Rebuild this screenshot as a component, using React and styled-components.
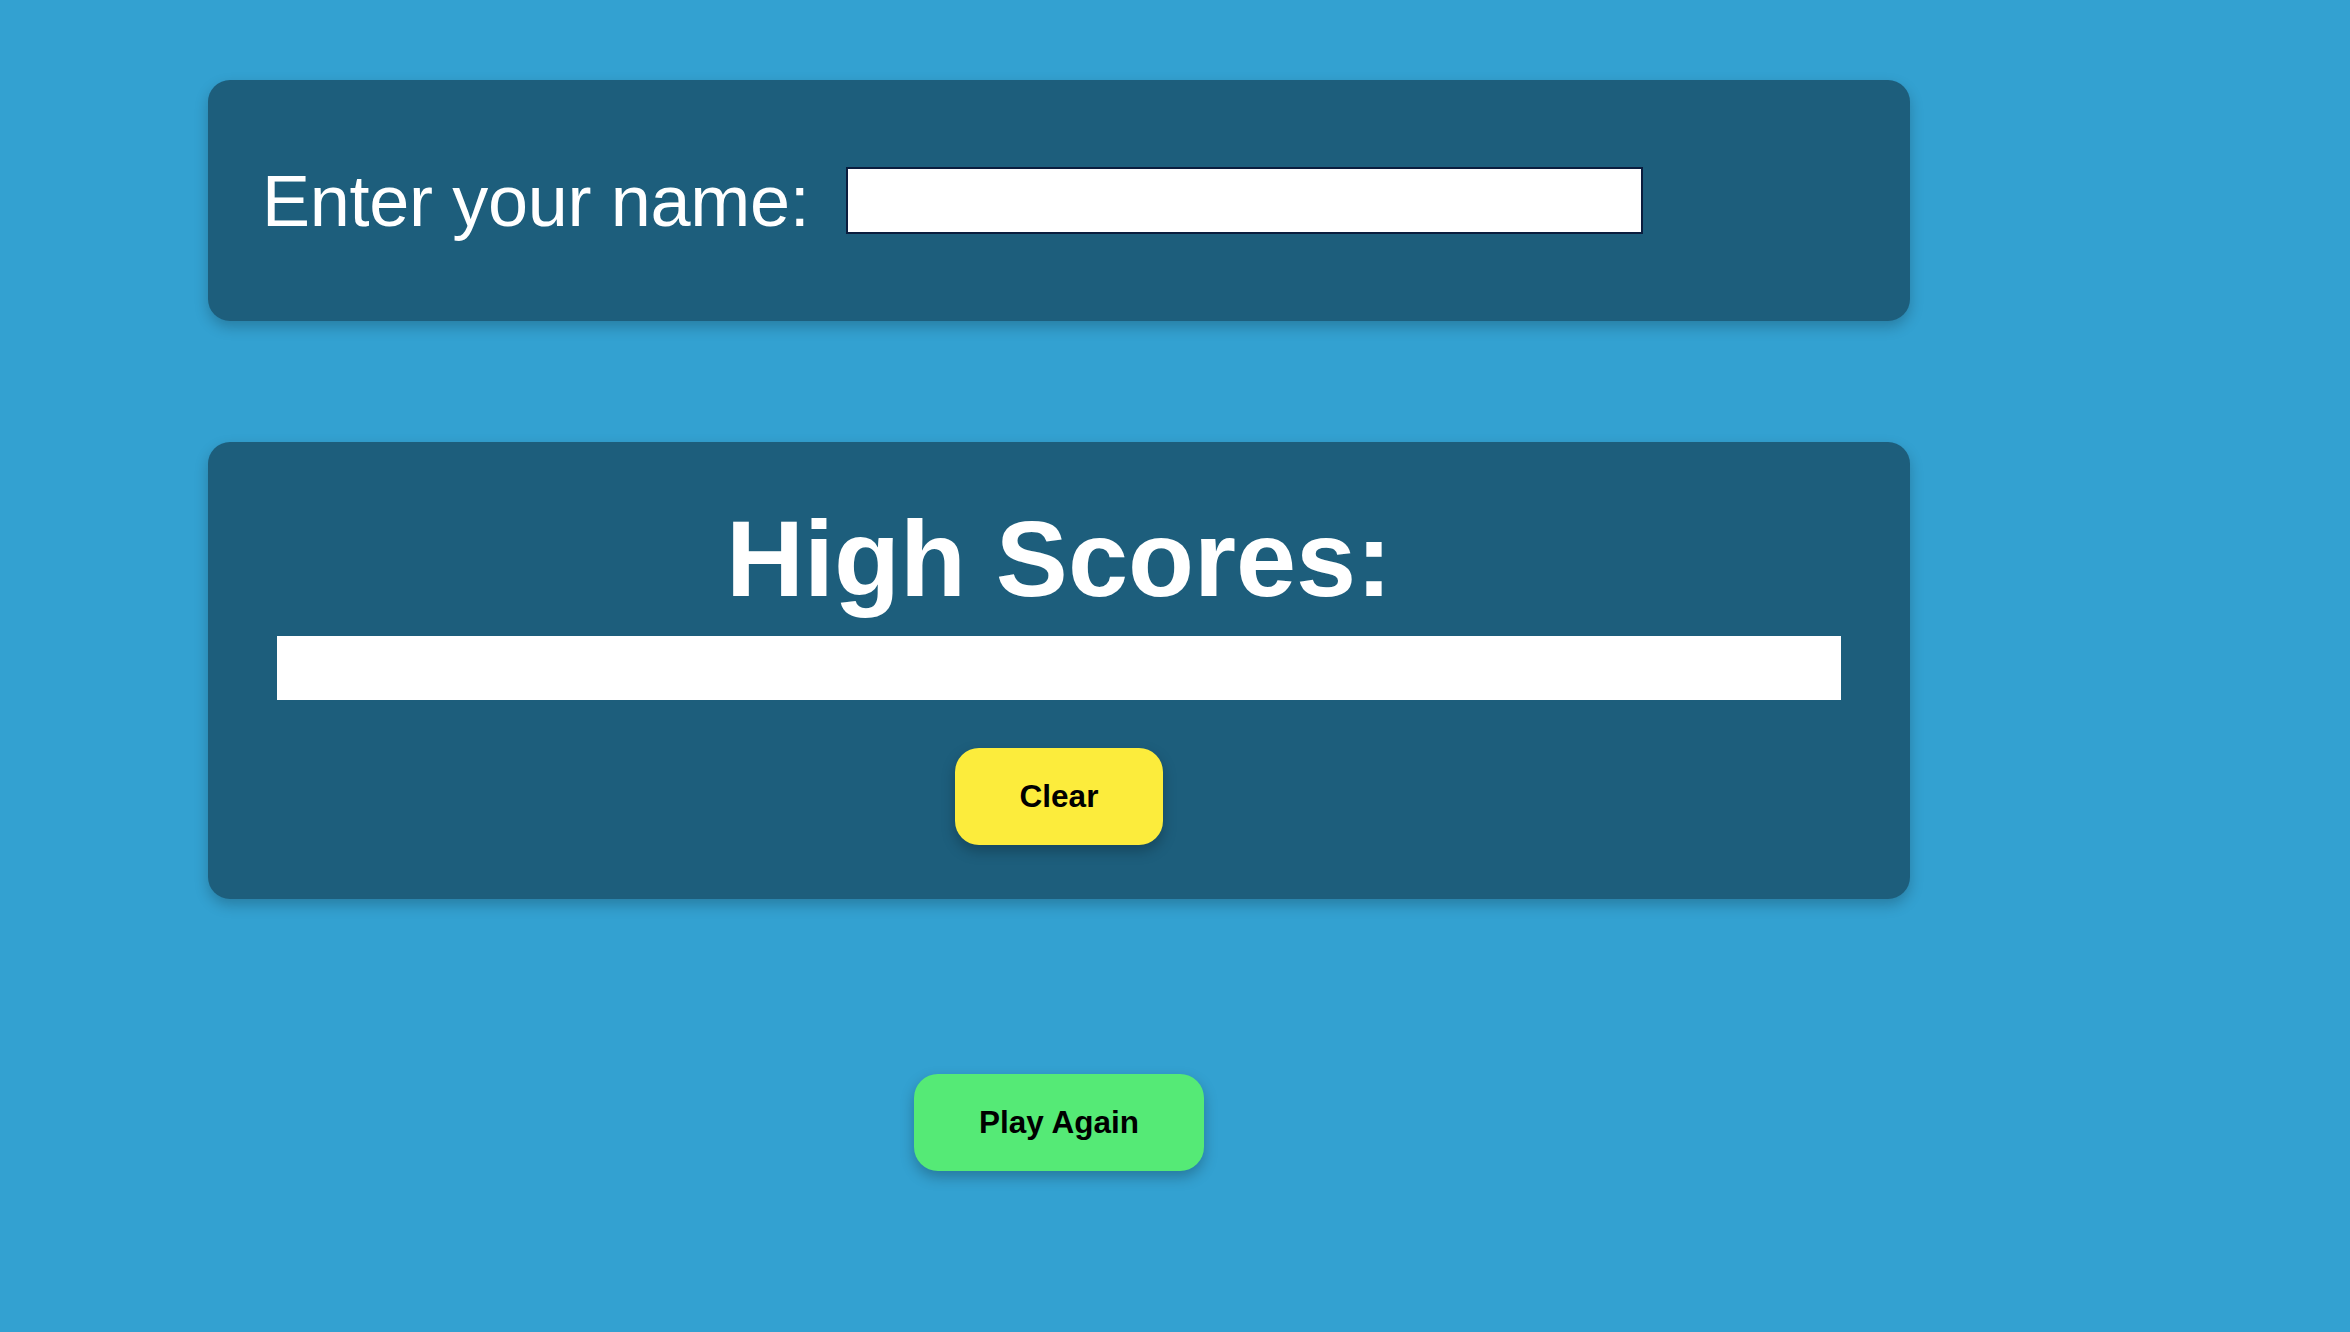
import React, { useState } from 'react';
import styled, { createGlobalStyle } from 'styled-components';

const GlobalStyle = createGlobalStyle`
  html, body {
    margin: 0;
    padding: 0;
    background-color: #33a1d1;
    font-family: "Liberation Sans", Arial, sans-serif;
  }
  * {
    box-sizing: border-box;
  }
`;

const Page = styled.main`
  width: 1702px;
  margin-left: 208px;
  padding-top: 80px;
  padding-bottom: 160px;
  display: flex;
  flex-direction: column;
  align-items: center;
`;

const Card = styled.section`
  width: 100%;
  background-color: #1d5e7c;
  border-radius: 22px;
  box-shadow: 0 6px 14px rgba(0, 0, 0, 0.22);
`;

const NameCard = styled(Card)`
  height: 241px;
  padding: 0 54px;
  display: flex;
  align-items: center;
  gap: 37px;
`;

const Label = styled.label`
  color: #fff;
  font-size: 72px;
  line-height: 82px;
  letter-spacing: -0.3px;
  white-space: nowrap;
`;

const NameInput = styled.input`
  width: 797px;
  height: 67px;
  border: 2px solid #0b1d3e;
  background: #fff;
  font-family: inherit;
  font-size: 36px;
  padding: 0 10px;
  outline: none;
`;

const ScoresCard = styled(Card)`
  margin-top: 121px;
  padding: 55px 69px 54px;
  display: flex;
  flex-direction: column;
  align-items: center;
`;

const Title = styled.h1`
  margin: 0 0 15px;
  color: #fff;
  font-size: 108px;
  line-height: 124px;
  font-weight: bold;
`;

const ScoreList = styled.ol`
  width: 100%;
  min-height: 64px;
  margin: 0;
  padding: 0;
  background: #fff;
  list-style: none;
`;

const Button = styled.button`
  height: 97px;
  width: ${p => p.$width}px;
  margin-top: ${p => p.$top}px;
  border: none;
  border-radius: 24px;
  background-color: ${p => p.$color};
  color: #000;
  font-family: inherit;
  font-weight: bold;
  font-size: 31.5px;
  cursor: pointer;
  box-shadow: 0 6px 14px rgba(0, 0, 0, 0.25);
`;

export default function App() {
  const [name, setName] = useState('');
  const [scores, setScores] = useState([]);

  return (
    <>
      <GlobalStyle />
      <Page>
        <NameCard>
          <Label htmlFor="name">Enter your name:</Label>
          <NameInput id="name" value={name} onChange={e => setName(e.target.value)} />
        </NameCard>

        <ScoresCard>
          <Title>High Scores:</Title>
          <ScoreList>
            {scores.map((s, i) => <li key={i}>{s}</li>)}
          </ScoreList>
          <Button $width={208} $top={48} $color="#fcec3c" onClick={() => setScores([])}>
            Clear
          </Button>
        </ScoresCard>

        <Button $width={290} $top={175} $color="#55ea76">
          Play Again
        </Button>
      </Page>
    </>
  );
}
